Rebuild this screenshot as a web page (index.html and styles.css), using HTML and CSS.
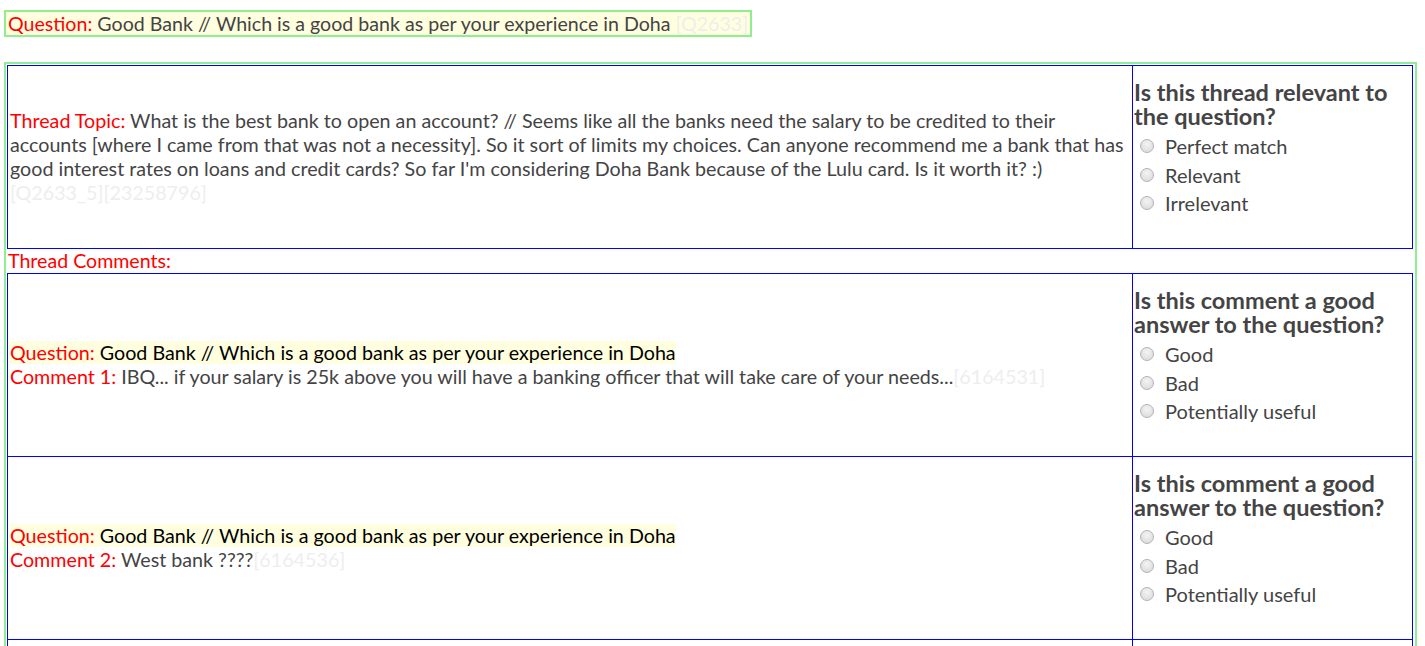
FILE: index.html
```html
<!DOCTYPE html>
<html lang="en">
<head>
    <meta charset="UTF-8">
    <title>Thread annotation</title>
    <link rel="stylesheet" href="styles.css">
</head>
<body>

<div class="question-box">
    <span class="label">Question:</span> Good Bank // Which is a good bank as per your experience in Doha <span class="ref">[Q2633]</span>
</div>

<div class="thread-box">
    <table class="grid">
        <tr>
            <td class="text">
                <span class="label">Thread Topic:</span> What is the best bank to open an account? // Seems like all the banks need the salary to be credited to their accounts [where I came from that was not a necessity]. So it sort of limits my choices. Can anyone recommend me a bank that has good interest rates on loans and credit cards? So far I'm considering Doha Bank because of the Lulu card. Is it worth it? :) <span class="ref">[Q2633_5][23258796]</span>
            </td>
            <td class="choice">
                <h3>Is this thread relevant to the question?</h3>
                <label class="option"><input type="radio" name="rel">Perfect match</label>
                <label class="option"><input type="radio" name="rel">Relevant</label>
                <label class="option"><input type="radio" name="rel">Irrelevant</label>
            </td>
        </tr>
    </table>

    <div class="label comments-title">Thread Comments:</div>

    <table class="grid">
        <tr>
            <td class="text">
                <span class="quote"><span class="label">Question:</span> Good Bank // Which is a good bank as per your experience in Doha</span><br>
                <span class="label">Comment 1:</span> IBQ... if your salary is 25k above you will have a banking officer that will take care of your needs...<span class="ref">[6164531]</span>
            </td>
            <td class="choice">
                <h3>Is this comment a good answer to the question?</h3>
                <label class="option"><input type="radio" name="c1">Good</label>
                <label class="option"><input type="radio" name="c1">Bad</label>
                <label class="option"><input type="radio" name="c1">Potentially useful</label>
            </td>
        </tr>
        <tr>
            <td class="text">
                <span class="quote"><span class="label">Question:</span> Good Bank // Which is a good bank as per your experience in Doha</span><br>
                <span class="label">Comment 2:</span> West bank ????<span class="ref">[6164536]</span>
            </td>
            <td class="choice">
                <h3>Is this comment a good answer to the question?</h3>
                <label class="option"><input type="radio" name="c2">Good</label>
                <label class="option"><input type="radio" name="c2">Bad</label>
                <label class="option"><input type="radio" name="c2">Potentially useful</label>
            </td>
        </tr>
        <tr>
            <td class="text">
                <span class="quote"><span class="label">Question:</span> Good Bank // Which is a good bank as per your experience in Doha</span><br>
                <span class="label">Comment 3:</span> QNB<span class="ref">[6164540]</span>
            </td>
            <td class="choice">
                <h3>Is this comment a good answer to the question?</h3>
                <label class="option"><input type="radio" name="c3">Good</label>
                <label class="option"><input type="radio" name="c3">Bad</label>
                <label class="option"><input type="radio" name="c3">Potentially useful</label>
            </td>
        </tr>
    </table>
</div>

</body>
</html>
```

FILE: styles.css
```css
body {
    font-family: 'Lato', 'Liberation Sans', sans-serif;
    font-size: 19.6px;
    line-height: 24px;
    color: #444;
    margin: 0;
    padding: 10px 8px 0 4px;
    background-color: white;
}
.label {
    color: red;
}
.ref {
    color: #eee;
}
.question-box {
    display: inline-block;
    border: 2px solid lightgreen;
    background-color: lightyellow;
    padding: 0 2px;
    line-height: 23px;
}
.thread-box {
    margin-top: 25px;
    border: 2px solid lightgreen;
    padding: 1px 2px 0 1px;
}
.grid {
    width: 100%;
    border-collapse: collapse;
    table-layout: fixed;
}
.grid tr {
    height: 183px;
}
.grid td {
    border: 1px solid blue;
    padding: 0 2px;
}
.grid td.text {
    vertical-align: middle;
    font-size: 19.7px;
}
.grid td.choice {
    width: 277px;
    vertical-align: top;
    padding: 14px 1px 0 1px;
}
.choice h3 {
    margin: 0 0 4px;
    font-size: 23.5px;
    line-height: 24px;
    font-weight: bold;
    color: #444;
}
.option {
    display: flex;
    align-items: center;
    height: 28.5px;
    font-size: 20px;
}
.option input {
    appearance: none;
    -webkit-appearance: none;
    margin: 0 11px 0 6px;
    width: 14px;
    height: 14px;
    border: 1px solid #b4b4b4;
    border-radius: 50%;
    background: radial-gradient(circle at 50% 35%, #f4f4f4 0%, #dcdcdc 80%);
}
.quote {
    background-color: lightyellow;
    color: black;
}
.comments-title {
    line-height: 24px;
    padding-left: 1px;
}
```
